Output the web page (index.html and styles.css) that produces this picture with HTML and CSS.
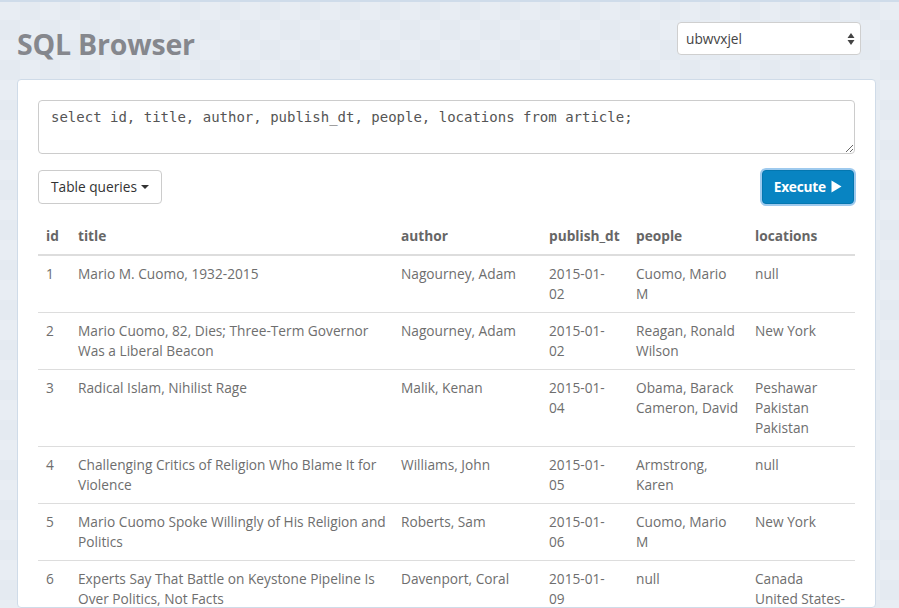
FILE: index.html
```html
<!DOCTYPE html>
<html>
<head>
<meta charset="utf-8">
<title>SQL Browser</title>
<link rel="stylesheet" href="styles.css">
</head>
<body>
<div class="page">
  <header class="header">
    <h1 class="title">SQL Browser</h1>
    <div class="select-wrap">
      <select class="db-select"><option>ubwvxjel</option></select>
      <svg class="select-arrows" width="8" height="14" viewBox="0 0 8 14"><path d="M4 1 L7.5 6 H0.5 Z M4 13 L7.5 8 H0.5 Z" fill="#444"/></svg>
    </div>
  </header>
  <main class="panel">
    <textarea class="query" spellcheck="false">select id, title, author, publish_dt, people, locations from article;</textarea>
    <div class="toolbar">
      <button class="btn btn-default">Table queries <span class="caret"></span></button>
      <button class="btn btn-primary">Execute <svg class="play" width="11" height="13" viewBox="0 0 11 13"><path d="M0.5 0.5 L10.5 6.5 L0.5 12.5 Z" fill="#fff"/></svg></button>
    </div>
    <table class="results">
      <colgroup>
        <col class="c-id"><col class="c-title"><col class="c-author"><col class="c-date"><col class="c-people"><col class="c-loc">
      </colgroup>
      <thead>
        <tr><th>id</th><th>title</th><th>author</th><th>publish_dt</th><th>people</th><th>locations</th></tr>
      </thead>
      <tbody>
        <tr><td>1</td><td>Mario M. Cuomo, 1932-2015</td><td>Nagourney, Adam</td><td>2015-01-<br>02</td><td>Cuomo, Mario<br>M</td><td>null</td></tr>
        <tr><td>2</td><td>Mario Cuomo, 82, Dies; Three-Term Governor<br>Was a Liberal Beacon</td><td>Nagourney, Adam</td><td>2015-01-<br>02</td><td>Reagan, Ronald<br>Wilson</td><td>New York</td></tr>
        <tr><td>3</td><td>Radical Islam, Nihilist Rage</td><td>Malik, Kenan</td><td>2015-01-<br>04</td><td>Obama, Barack<br>Cameron, David</td><td>Peshawar<br>Pakistan<br>Pakistan</td></tr>
        <tr><td>4</td><td>Challenging Critics of Religion Who Blame It for<br>Violence</td><td>Williams, John</td><td>2015-01-<br>05</td><td>Armstrong,<br>Karen</td><td>null</td></tr>
        <tr><td>5</td><td>Mario Cuomo Spoke Willingly of His Religion and<br>Politics</td><td>Roberts, Sam</td><td>2015-01-<br>06</td><td>Cuomo, Mario<br>M</td><td>New York</td></tr>
        <tr><td>6</td><td>Experts Say That Battle on Keystone Pipeline Is<br>Over Politics, Not Facts</td><td>Davenport, Coral</td><td>2015-01-<br>09</td><td>null</td><td>Canada<br>United States-</td></tr>
      </tbody>
    </table>
  </main>
</div>
</body>
</html>
```
FILE: styles.css
```css
html, body {
  margin: 0;
  height: 100%;
}
body {
  font-family: "Open Sans", "Noto Sans", sans-serif;
  font-size: 13.7px;
  line-height: 20px;
  color: #6e6e6e;
  background-color: #e6ecf2;
  background-image: repeating-conic-gradient(#e4eaf1 0 25%, #e8edf3 0 50%);
  background-size: 40px 40px;
  border-top: 2px solid #cfdcea;
  box-sizing: border-box;
  overflow: hidden;
}
.page {
  box-sizing: border-box;
  height: 100%;
  padding: 0 23px 0 17px;
  display: flex;
  flex-direction: column;
}
.header {
  flex: none;
  display: flex;
  justify-content: space-between;
  align-items: flex-start;
  height: 77px;
}
.title {
  margin: 22px 0 0 0;
  font-size: 28.5px;
  line-height: 40px;
  font-weight: 700;
  color: #85878d;
  letter-spacing: -0.2px;
}
.select-wrap {
  position: relative;
  margin-top: 20px;
  margin-right: 15px;
}
.db-select {
  appearance: none;
  -webkit-appearance: none;
  width: 184px;
  height: 33px;
  padding: 0 8px;
  border: 1px solid #cfcfcf;
  border-radius: 4px;
  background: #fff;
  font-family: "Open Sans", "Noto Sans", sans-serif;
  font-size: 13.7px;
  color: #444;
}
.select-arrows {
  position: absolute;
  right: 6px;
  top: 10px;
  pointer-events: none;
}
.panel {
  flex: 1;
  min-height: 0;
  overflow: hidden;
  background: #fff;
  border: 1px solid #cfdbe8;
  border-radius: 4px;
  padding: 20px 20px 0 20px;
}
.query {
  display: block;
  box-sizing: border-box;
  width: 100%;
  height: 54px;
  margin: 0;
  padding: 6px 12px;
  border: 1px solid #cccccc;
  border-radius: 4px;
  font-family: "DejaVu Sans Mono", monospace;
  font-size: 14px;
  line-height: 20px;
  color: #555;
  resize: vertical;
  outline: none;
}
.toolbar {
  display: flex;
  justify-content: space-between;
  align-items: center;
  margin-top: 15px;
}
.btn {
  font-family: "Open Sans", "Noto Sans", sans-serif;
  font-size: 13.7px;
  line-height: 20px;
  height: 34px;
  padding: 6px 12px;
  border-radius: 4px;
  cursor: pointer;
  display: inline-flex;
  align-items: center;
  gap: 5px;
}
.btn-default {
  background: #fff;
  border: 1px solid #cccccc;
  color: #333;
  margin-top: 1px;
}
.caret {
  display: inline-block;
  width: 0;
  height: 0;
  border-left: 4px solid transparent;
  border-right: 4px solid transparent;
  border-top: 4px solid #333;
  margin-left: -1px;
}
.btn-primary {
  background: #0884c2;
  border: 1px solid #0477b0;
  color: #fff;
  font-weight: 700;
  box-shadow: 0 0 0 2px #9ecaee;
  margin-right: 1px;
  padding: 6px 11px 6px 11px;
  gap: 5px;
  letter-spacing: -0.2px;
}
.results {
  width: 100%;
  margin-top: 14px;
  border-collapse: collapse;
  table-layout: fixed;
}
.c-id { width: 32px; }
.c-title { width: 323px; }
.c-author { width: 148px; }
.c-date { width: 87px; }
.c-people { width: 119px; }
.c-loc { width: auto; }
.results th, .results td {
  padding: 8px;
  text-align: left;
  vertical-align: top;
  white-space: nowrap;
  overflow: hidden;
}
.results th {
  font-weight: 700;
  color: #666;
  border-bottom: 2px solid #dddddd;
}
.results td {
  border-top: 1px solid #dddddd;
}
.results tbody tr:first-child td {
  border-top: 0;
}
```
